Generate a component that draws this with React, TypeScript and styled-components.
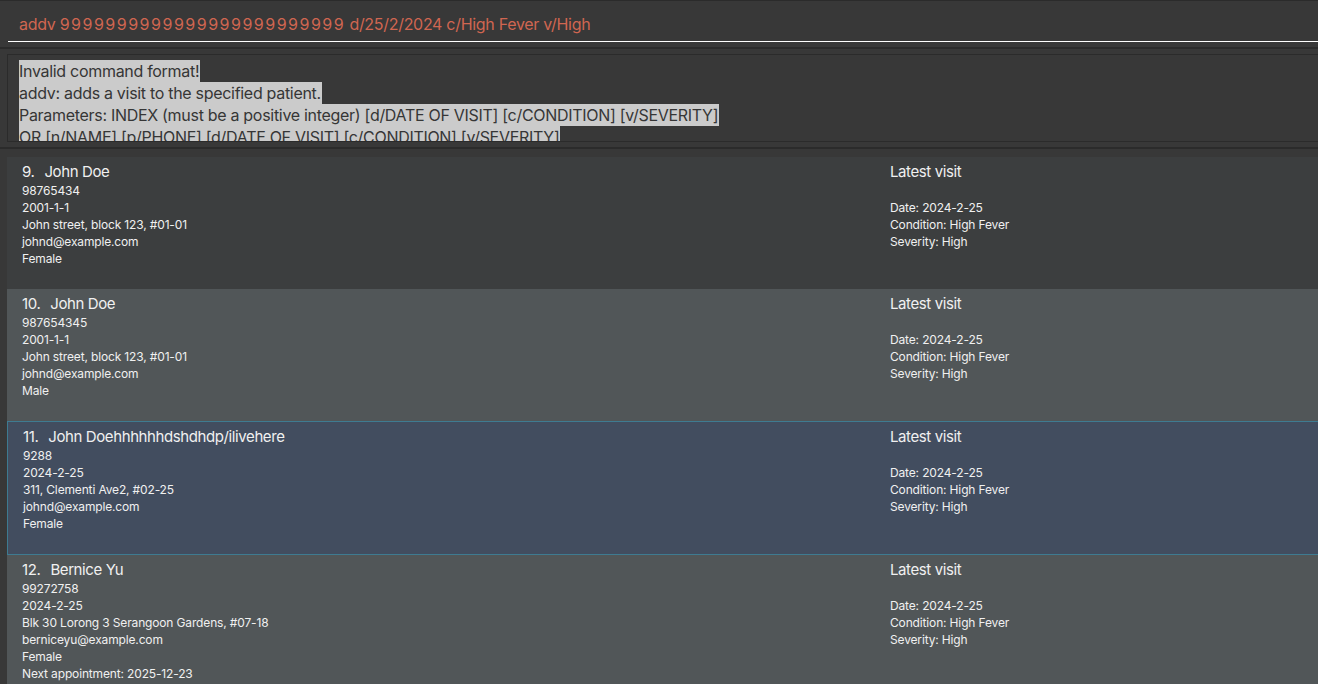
import React from "react";
import styled, { createGlobalStyle } from "styled-components";

const Global = createGlobalStyle`
  html, body { margin: 0; padding: 0; background: #383838; }
  body { font-family: Inter, "Open Sans", sans-serif; overflow: hidden; }
  * { box-sizing: border-box; }
`;

const Window = styled.div`
  width: 1318px;
  height: 684px;
  overflow: hidden;
  background: #383838;
  border-top: 1px solid #2b2b2b;
  display: flex;
  flex-direction: column;
`;

const CommandArea = styled.div`
  height: 48px;
  flex-shrink: 0;
  padding: 0 0 5px 8px;
  border-bottom: 2px solid #2b2b2b;
`;

const CommandInput = styled.div`
  height: 41px;
  border-bottom: 1px solid #ffffff;
  padding: 5px 0 0 11px;
  display: flex;
  align-items: center;
  color: #d06651;
  font-size: 16px;
  letter-spacing: -0.3px;
  white-space: pre;
`;

const Digits = styled.span`
  letter-spacing: 1.5px;
`;

const ResultArea = styled.div`
  flex-shrink: 0;
  padding: 5px 0 5px 7px;
  border-bottom: 2px solid #2b2b2b;
`;

const ResultBox = styled.div`
  height: 88px;
  border: 1px solid #2b2b2b;
  border-right: none;
  overflow: hidden;
  padding: 5px 0 0 11px;
`;

const ResultLine = styled.span`
  display: block;
  width: fit-content;
  background: #cbcbcb;
  color: #363636;
  font-size: 16px;
  letter-spacing: -0.3px;
  line-height: 22px;
  padding-right: 1px;
  white-space: nowrap;
`;

const ListArea = styled.div`
  flex: 1;
  min-height: 0;
  overflow: hidden;
  padding: 9px 0 0 7px;
`;

const ListInner = styled.div`
  margin-top: -1px;
`;

const Card = styled.div<{ $variant: "even" | "odd" | "selected" }>`
  display: grid;
  grid-template-columns: 1fr 428px;
  height: ${(p) => (p.$variant === "selected" ? 134 : 132)}px;
  padding: 5px 0 0 15px;
  background: ${(p) =>
    p.$variant === "even" ? "#3c3e3f" : p.$variant === "odd" ? "#515658" : "#424d5f"};
  border: ${(p) => (p.$variant === "selected" ? "1px solid #3e7b91" : "none")};
  border-right: none;
  color: #f0f0f0;
`;

const Column = styled.div`
  display: flex;
  flex-direction: column;
`;

const Title = styled.div`
  font-size: 15px;
  letter-spacing: -0.4px;
  line-height: 20px;
  white-space: nowrap;
  display: flex;
`;

const Index = styled.span`
  margin-right: 10px;
`;

const Detail = styled.div`
  font-size: 12px;
  letter-spacing: -0.15px;
  line-height: 17px;
  min-height: 17px;
  white-space: nowrap;
`;

type Person = {
  idx: number;
  name: string;
  phone: string;
  dob: string;
  address: string;
  email: string;
  gender: string;
  appointment?: string;
};

const people: Person[] = [
  { idx: 9, name: "John Doe", phone: "98765434", dob: "2001-1-1", address: "John street, block 123, #01-01", email: "johnd@example.com", gender: "Female" },
  { idx: 10, name: "John Doe", phone: "987654345", dob: "2001-1-1", address: "John street, block 123, #01-01", email: "johnd@example.com", gender: "Male" },
  { idx: 11, name: "John Doehhhhhhdshdhdp/ilivehere", phone: "9288", dob: "2024-2-25", address: "311, Clementi Ave2, #02-25", email: "johnd@example.com", gender: "Female" },
  { idx: 12, name: "Bernice Yu", phone: "99272758", dob: "2024-2-25", address: "Blk 30 Lorong 3 Serangoon Gardens, #07-18", email: "berniceyu@example.com", gender: "Female", appointment: "2025-12-23" },
];

const resultLines = [
  "Invalid command format!",
  "addv: adds a visit to the specified patient.",
  "Parameters: INDEX (must be a positive integer) [d/DATE OF VISIT] [c/CONDITION] [v/SEVERITY]",
  "OR [n/NAME] [p/PHONE] [d/DATE OF VISIT] [c/CONDITION] [v/SEVERITY]",
];

export default function App() {
  return (
    <Window>
      <Global />
      <CommandArea>
        <CommandInput>
          {"addv "}
          <Digits>9999999999999999999999999</Digits>
          {" d/25/2/2024 c/High Fever v/High"}
        </CommandInput>
      </CommandArea>
      <ResultArea>
        <ResultBox>
          {resultLines.map((l) => (
            <ResultLine key={l}>{l}</ResultLine>
          ))}
        </ResultBox>
      </ResultArea>
      <ListArea>
        <ListInner>
          {people.map((p) => {
            const variant = p.idx === 11 ? "selected" : p.idx % 2 === 1 ? "even" : "odd";
            return (
              <Card key={p.idx} $variant={variant}>
                <Column>
                  <Title>
                    <Index>{p.idx}.</Index>
                    {p.name}
                  </Title>
                  <Detail>{p.phone}</Detail>
                  <Detail>{p.dob}</Detail>
                  <Detail>{p.address}</Detail>
                  <Detail>{p.email}</Detail>
                  <Detail>{p.gender}</Detail>
                  {p.appointment && <Detail>Next appointment: {p.appointment}</Detail>}
                </Column>
                <Column>
                  <Title>Latest visit</Title>
                  <Detail />
                  <Detail>Date: 2024-2-25</Detail>
                  <Detail>Condition: High Fever</Detail>
                  <Detail>Severity: High</Detail>
                </Column>
              </Card>
            );
          })}
        </ListInner>
      </ListArea>
    </Window>
  );
}
